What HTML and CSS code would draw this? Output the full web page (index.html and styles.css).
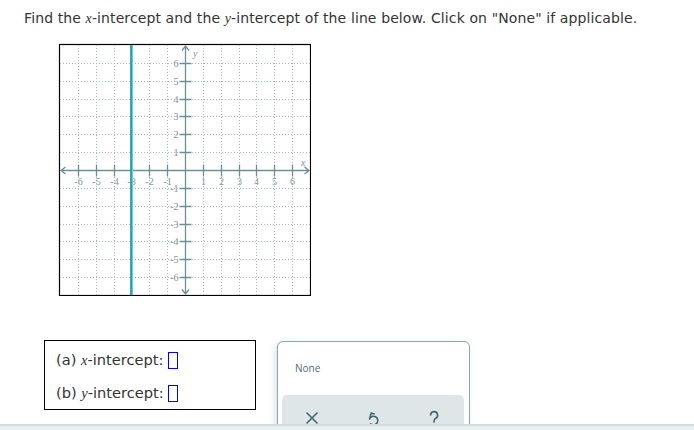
FILE: index.html
```html
<!DOCTYPE html>
<html>
<head>
<meta charset="utf-8">
<link rel="stylesheet" href="styles.css">
</head>
<body>
<div class="title">Find the <i class="m">x</i>-intercept and the <i class="m">y</i>-intercept of the line below. Click on "None" if applicable.</div>
<div class="graph-wrap">
<svg class="graph" width="253" height="253" viewBox="0 0 253 253">
  <rect x="1.5" y="1.5" width="251" height="251" fill="#fff" stroke="#000" stroke-width="1.2"/>
  <path class="grid" d="M20.5 2V252M38.5 2V252M56.5 2V252M73.5 2V252M91.5 2V252M109.5 2V252M145.5 2V252M163.5 2V252M181.5 2V252M198.5 2V252M216.5 2V252M234.5 2V252M2 20.5H252M2 38.5H252M2 56.5H252M2 73.5H252M2 91.5H252M2 109.5H252M2 145.5H252M2 163.5H252M2 181.5H252M2 198.5H252M2 216.5H252M2 234.5H252"/>
  <path class="axis" d="M3 127.5H251M127.5 3V251M246.5 124L251 127.5L246.5 131M7.5 124L3 127.5L7.5 131M124 7.5L127.5 3L131 7.5M124 246.5L127.5 251L131 246.5"/>
  <path class="axis" d="M20.5 121.5V133.5M38.5 121.5V133.5M56.5 121.5V133.5M73.5 121.5V133.5M91.5 121.5V133.5M109.5 121.5V133.5M145.5 121.5V133.5M163.5 121.5V133.5M181.5 121.5V133.5M198.5 121.5V133.5M216.5 121.5V133.5M234.5 121.5V133.5M121.5 20.5H133.5M121.5 38.5H133.5M121.5 56.5H133.5M121.5 73.5H133.5M121.5 91.5H133.5M121.5 109.5H133.5M121.5 145.5H133.5M121.5 163.5H133.5M121.5 181.5H133.5M121.5 198.5H133.5M121.5 216.5H133.5M121.5 234.5H133.5"/>
  <g class="lbl xl">
    <text x="20.5" y="142">-6</text><text x="38.5" y="142">-5</text><text x="56.5" y="142">-4</text><text x="73.5" y="142">-3</text><text x="91.5" y="142">-2</text><text x="109.5" y="142">-1</text>
    <text x="145.5" y="142">1</text><text x="163.5" y="142">2</text><text x="181.5" y="142">3</text><text x="198.5" y="142">4</text><text x="216.5" y="142">5</text><text x="234.5" y="142">6</text>
  </g>
  <g class="lbl yl">
    <text x="120.5" y="24">6</text><text x="120.5" y="42">5</text><text x="120.5" y="60">4</text><text x="120.5" y="77">3</text><text x="120.5" y="95">2</text><text x="120.5" y="113">1</text>
    <text x="120.5" y="149">-1</text><text x="120.5" y="167">-2</text><text x="120.5" y="185">-3</text><text x="120.5" y="202">-4</text><text x="120.5" y="220">-5</text><text x="120.5" y="238">-6</text>
  </g>
  <text class="lbl al" x="243" y="123">x</text>
  <text class="lbl al" x="135" y="14">y</text>
  <line class="blue-halo" x1="74" y1="2" x2="74" y2="252"/>
  <line class="blue" x1="73.2" y1="2" x2="73.2" y2="252"/>
</svg>
</div>
<div class="answers">
  <div class="answer-box">
    <div class="row">(a) <i class="m">x</i>-intercept: <span class="inp"></span></div>
    <div class="row">(b) <i class="m">y</i>-intercept: <span class="inp"></span></div>
  </div>
  <div class="card">
    <div class="none">None</div>
    <div class="tools">
      <span class="tool"><svg width="16" height="16" viewBox="0 0 16 16"><path d="M3 3L13 13M13 3L3 13"/></svg></span>
      <span class="tool"><svg width="16" height="16" viewBox="0 0 16 16"><path d="M6.2 3L9.2 3.9M6.2 3L4.5 9A4.3 4.3 0 1 1 5.7 13.8"/></svg></span>
      <span class="tool"><svg width="16" height="16" viewBox="0 0 16 16"><path d="M4.6 5A3.5 3.5 0 1 1 9.4 8.4Q8 9.4 8 12"/></svg></span>
    </div>
  </div>
</div>
<div class="bottom-bar"></div>
</body>
</html>
```
FILE: styles.css
```css
html, body {
  margin: 0;
  background: #fff;
}
body {
  font-family: "DejaVu Sans", Verdana, sans-serif;
  color: #333;
  overflow: hidden;
}
.m {
  font-family: "Liberation Serif", "Times New Roman", serif;
  font-style: italic;
}
.title {
  font-size: 14px;
  line-height: 17px;
  padding: 10px 0 0 24px;
  letter-spacing: 0.11px;
}
.graph-wrap {
  margin-top: 16px;
  padding-left: 58px;
}
.graph {
  display: block;
}
.grid {
  fill: none;
  stroke: #a4b9bf;
  stroke-width: 1;
  stroke-dasharray: 1 2;
}
.axis {
  fill: none;
  stroke: #6d8f97;
  stroke-width: 1.3;
}
.lbl {
  font-family: "Liberation Serif", "Times New Roman", serif;
  font-size: 10px;
  fill: #7a959b;
}
.xl text {
  text-anchor: middle;
}
.yl text {
  text-anchor: end;
}
.al {
  font-style: italic;
}
.blue {
  stroke: #1fa2bd;
  stroke-width: 2.2;
}
.blue-halo {
  stroke: #9fd8e3;
  stroke-width: 2;
}
.answers {
  display: flex;
  align-items: flex-start;
  margin-top: 44px;
  padding-left: 44px;
}
.answer-box {
  border: 1px solid #000;
  padding: 10px 0 0 11px;
  display: flex;
  flex-direction: column;
  gap: 15px;
  height: 58px;
  width: 199px;
  font-size: 14.6px;
}
.row {
  line-height: 18px;
  height: 18px;
  display: flex;
  align-items: center;
  white-space: pre;
}
.inp {
  display: inline-block;
  width: 8px;
  height: 15px;
  border: 1px solid #0000ff;
  margin-left: 0;
}
.card {
  margin-left: 21px;
  margin-top: 1px;
  width: 191px;
  height: 120px;
  border: 1px solid #8ca7ad;
  border-radius: 6px;
  box-shadow: -2px 2px 6px rgba(60, 90, 100, 0.18);
  background: #fff;
}
.none {
  font-family: "Open Sans", sans-serif;
  font-size: 10px;
  color: #4f6f78;
  padding: 19px 0 0 17px;
  line-height: 14px;
}
.tools {
  margin: 20px 5px 0 4px;
  height: 40px;
  background: #dfe6e8;
  border-radius: 5px;
  display: grid;
  grid-template-columns: repeat(3, 1fr);
  padding-top: 15px;
  box-sizing: border-box;
}
.tool {
  display: flex;
  justify-content: center;
}
.tool svg {
  fill: none;
  stroke: #3e6771;
  stroke-width: 1.6;
  stroke-linecap: round;
  stroke-linejoin: round;
}
.bottom-bar {
  position: fixed;
  left: 0;
  right: 0;
  bottom: 0;
  height: 4px;
  background: #e9eef0;
  border-top: 2px solid #d4dde0;
}
```
